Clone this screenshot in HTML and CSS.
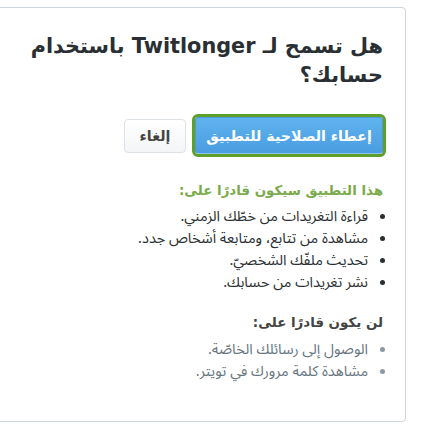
FILE: index.html
```html
<!DOCTYPE html>
<html lang="ar" dir="rtl">
<head>
<meta charset="utf-8">
<title>Twitlonger</title>
<link rel="stylesheet" href="styles.css">
</head>
<body>
<div class="card">
  <h1 class="title">هل تسمح لـ Twitlonger باستخدام حسابك؟</h1>
  <div class="actions">
    <button class="btn btn-primary" type="button"><span class="btn-label">إعطاء الصلاحية للتطبيق</span></button>
    <button class="btn btn-cancel" type="button"><span class="btn-label">إلغاء</span></button>
  </div>
  <h2 class="sub sub-can">هذا التطبيق سيكون قادرًا على:</h2>
  <ul class="perms">
    <li>قراءة التغريدات من خطّك الزمني.</li>
    <li>مشاهدة من تتابع، ومتابعة أشخاص جدد.</li>
    <li>تحديث ملفّك الشخصيّ.</li>
    <li>نشر تغريدات من حسابك.</li>
  </ul>
  <h2 class="sub sub-cannot">لن يكون قادرًا على:</h2>
  <ul class="perms perms-no">
    <li>الوصول إلى رسائلك الخاصّة.</li>
    <li>مشاهدة كلمة مرورك في تويتر.</li>
  </ul>
</div>
</body>
</html>
```
FILE: styles.css
```css
html, body {
  margin: 0;
  padding: 0;
  background: #fff;
  overflow: hidden;
}
body {
  font-family: "DejaVu Sans", "Noto Sans", sans-serif;
  color: #333;
  direction: rtl;
}
.card {
  box-sizing: border-box;
  width: 470px;
  margin: 7px 16px 0 auto;
  border: 1px solid #ccd6dd;
  border-radius: 4px;
  padding: 24px 22px 38px 22px;
  background: #fff;
}
.title {
  margin: 0;
  font-size: 20.8px;
  line-height: 29px;
  font-weight: bold;
  color: #292f33;
  max-width: 380px;
}
.actions {
  display: flex;
  align-items: center;
  gap: 9px;
  margin-top: 27px;
}
.btn {
  font: inherit;
  cursor: pointer;
  border-radius: 3px;
  display: flex;
  align-items: center;
  justify-content: center;
}
.btn-label {
  font-family: "DejaVu Sans", sans-serif;
  font-weight: bold;
  font-size: 14.2px;
  line-height: 18px;
}
.btn-primary {
  height: 37px;
  width: 188px;
  color: #fff;
  background: linear-gradient(#5fb3ee, #4a9de0);
  border: 1px solid #4a9ad8;
  border-bottom-color: #8cc4ee;
  outline: 3px solid #5e9f2c;
  outline-offset: 0;
  padding: 0 8px;
}
.btn-cancel {
  height: 34px;
  width: 62px;
  color: #444;
  background: linear-gradient(#fff, #f3f5f7);
  border: 1px solid #dde2e6;
  border-radius: 4px;
  padding: 0;
}
.sub {
  margin: 26px 0 0;
  font-size: 13.4px;
  line-height: 22px;
  font-weight: bold;
}
.sub-can {
  color: #79ab4b;
}
.sub-cannot {
  margin-top: 18px;
  color: #444;
}
.perms {
  margin: 4px 0 0;
  padding: 0 15px 0 0;
  list-style: disc outside;
  font-family: "Noto Sans Arabic", "DejaVu Sans", sans-serif;
  font-size: 14.5px;
  line-height: 22px;
  color: #292f33;
}
.perms li::marker {
  font-size: 12px;
  color: #292f33;
}
.perms-no {
  margin-top: 5px;
  color: #66757f;
}
.perms-no li::marker {
  color: #8899a6;
}
```
